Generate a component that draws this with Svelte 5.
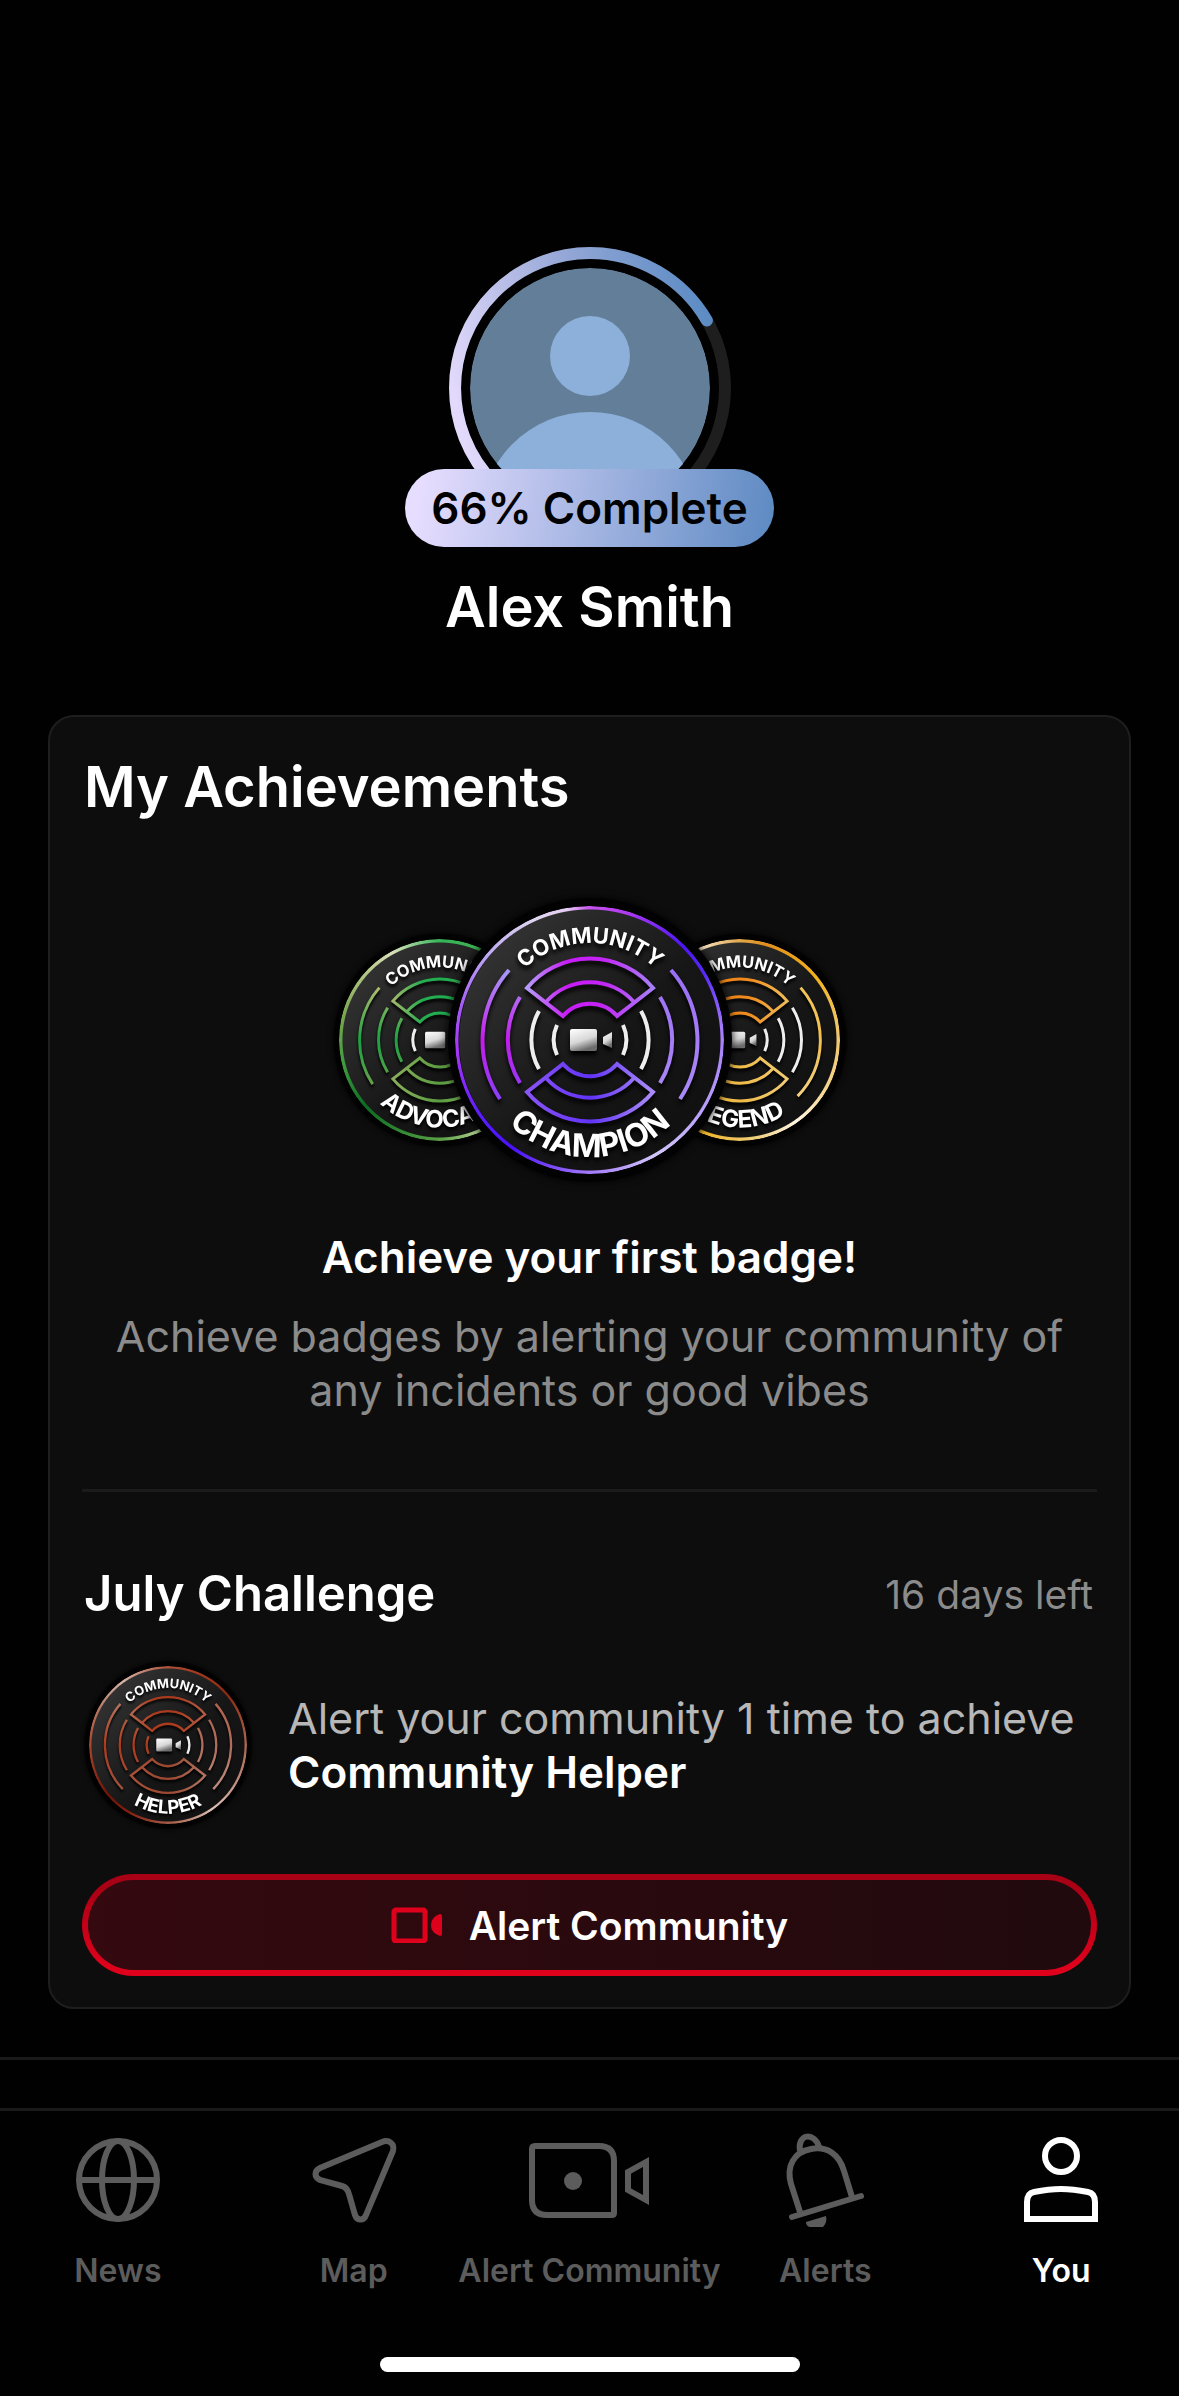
<script lang="ts">
	interface BadgeStyle {
		id: string,
		title: string,
		ring: string,
		top: string[],
		bottom: string[],
		left: string[],
		right: string[],
		litLeft: number,
		litRight: number,
		longArcs: boolean
	}

	const advocate: BadgeStyle = {
		id: "advocate",
		title: "ADVOCATE",
		ring: "#35b558, #4aa648 60deg, #9fc07a 110deg, #d5e3b4 145deg, #5aa045 180deg, #3f8f3a 195deg, #0d6b22 228deg, #3f9a3f 255deg, #7aa650 285deg, #b9c98c 315deg, #d8dfbb 332deg, #35b558",
		top: ["#a3b86a", "#21ad50", "#21ad50", "#6fb05a"],
		bottom: ["#8aae5c", "#5a9c40", "#8fb868"],
		left: ["#a9bb6c", "#1aa043", "#6f9f4a"],
		right: ["#6fb05a", "#8fb868", "#8fb868"],
		litLeft: 1,
		litRight: 2,
		longArcs: false
	};

	const champion: BadgeStyle = {
		id: "champion",
		title: "CHAMPION",
		ring: "#c653ee, #b23cf0 15deg, #4c16f5 45deg, #5a28f8 60deg, #a57cf8 85deg, #b9a2f8 125deg, #d2c6fb 150deg, #9a6cf8 185deg, #4a12f8 215deg, #5a1cfa 235deg, #a636f5 265deg, #a45cf3 285deg, #bdaaf2 310deg, #dcd5ee 335deg, #e6cdf3 350deg, #c653ee",
		top: ["#b69cf8", "#c81cf6", "#c424f6", "#a880f8"],
		bottom: ["#8a55f6", "#6133f6", "#ab8cfa"],
		left: ["#a894f6", "#c41cec", "#8444f6"],
		right: ["#9a70f6", "#a67cf6", "#a98cf8"],
		litLeft: 2,
		litRight: 2,
		longArcs: false
	};

	const legend: BadgeStyle = {
		id: "legend",
		title: "LEGEND",
		ring: "#e2a94e, #e08e1c 15deg, #f2b21c 50deg, #f0c564 80deg, #f5d58c 120deg, #fff6e4 145deg, #f0cf7e 170deg, #efb52c 200deg, #efab14 230deg, #f0c060 280deg, #fff 325deg, #e2a94e",
		top: ["#f0c060", "#f08414", "#f08c20", "#f0bc58"],
		bottom: ["#f2b93c", "#eebb48", "#f2cb74"],
		left: ["#f0c060", "#f08a1c", "#f0b030"],
		right: ["#f2c558", "#f0bf52", "#f3cf7c"],
		litLeft: 1,
		litRight: 3,
		longArcs: true
	};

	const helper: BadgeStyle = {
		id: "helper",
		title: "HELPER",
		ring: "#ab5038, #a33c20 20deg, #8c2a12 50deg, #a8604a 85deg, #c08e7e 120deg, #dcc0b6 145deg, #a86450 175deg, #842010 210deg, #701408 230deg, #a8482e 270deg, #b87c6a 300deg, #d6b4a8 325deg, #ab5038",
		top: ["#b46650", "#ac3a1c", "#ac3a1c", "#b05e46"],
		bottom: ["#aa5038", "#9c4830", "#b27462"],
		left: ["#b0705c", "#ac3a1c", "#a0503c"],
		right: ["#b06450", "#b06c5a", "#bc8a7c"],
		litLeft: 0,
		litRight: 1,
		longArcs: true
	};

	// innermost first
	const sideArcs = [
		{ r: 36, x1: 33, y1: -15, x2: 33, y2: 15 },
		{ r: 59, x1: 51, y1: -29, x2: 51, y2: 29 },
		{ r: 82, x1: 70, y1: -43, x2: 70, y2: 43 },
		{ r: 107, x1: 81, y1: -70, x2: 90, y2: 59 }
	];

	function sideArc(index: number, dir: number, long: boolean) {
		const a = sideArcs[index];
		const x2 = index == 3 && long ? 77 : a.x2;
		const y2 = index == 3 && long ? 75 : a.y2;
		return `M${a.x1 * dir} ${a.y1} A${a.r} ${a.r} 0 0 ${dir > 0 ? 1 : 0} ${x2 * dir} ${y2}`;
	}

	let stepsDone = $state(2);
	let stepsTotal = 3;
	let progress = $derived(stepsDone / stepsTotal * 100);
	let currentTab = $state("You");

	const tabs = ["News", "Map", "Alert Community", "Alerts", "You"];
</script>

{#snippet badge(b: BadgeStyle)}
	<div class="badge {b.id}" style="--ring: conic-gradient({b.ring})">
		<svg viewBox="-143 -143 286 286" role="img" aria-label="Community {b.title.toLowerCase()} badge">
			<defs>
				<linearGradient id="{b.id}-disc" x1="0" y1="0" x2="1" y2="1">
					<stop offset="0.1" stop-color="#343434" />
					<stop offset="0.55" stop-color="#161616" />
					<stop offset="0.9" stop-color="#101010" />
				</linearGradient>
				<linearGradient id="{b.id}-cam" x1="0" y1="0" x2="0.4" y2="1">
					<stop offset="0" stop-color="#fff" />
					<stop offset="0.6" stop-color="#d8d8d8" />
					<stop offset="1" stop-color="#6c6c6c" />
				</linearGradient>
				<linearGradient id="{b.id}-top" gradientUnits="userSpaceOnUse" x1="-63" y1="0" x2="63" y2="0">
					{#each b.top as color, i}
						<stop offset={[0, 0.32, 0.6, 1][i]} stop-color={color} />
					{/each}
				</linearGradient>
				<linearGradient id="{b.id}-bottom" gradientUnits="userSpaceOnUse" x1="-63" y1="0" x2="63" y2="0">
					{#each b.bottom as color, i}
						<stop offset={i / 2} stop-color={color} />
					{/each}
				</linearGradient>
				<linearGradient id="{b.id}-left" gradientUnits="userSpaceOnUse" x1="0" y1="-66" x2="0" y2="66">
					{#each b.left as color, i}
						<stop offset={i / 2} stop-color={color} />
					{/each}
				</linearGradient>
				<linearGradient id="{b.id}-right" gradientUnits="userSpaceOnUse" x1="0" y1="-66" x2="0" y2="66">
					{#each b.right as color, i}
						<stop offset={i / 2} stop-color={color} />
					{/each}
				</linearGradient>
				<path id="{b.id}-upper-line" d="M-97 0 A97 97 0 0 1 97 0" />
				<path id="{b.id}-lower-line" d="M-117 0 A117 117 0 0 0 117 0" />
			</defs>

			<circle class="shade" r="142" />
			<circle r="131" fill="url(#{b.id}-disc)" />

			<g class="lines">
				<g stroke="url(#{b.id}-top)">
					<path d="M-63 -52 A82 82 0 0 1 63 -52 L27 -24 A36 36 0 0 0 -27 -24 Z" />
					<path d="M-44 -38 A59 59 0 0 1 44 -38" />
				</g>
				<g stroke="url(#{b.id}-bottom)">
					<path d="M-63 52 A82 82 0 0 0 63 52 L27 24 A36 36 0 0 1 -27 24 Z" />
					<path d="M-44 38 A59 59 0 0 0 44 38" />
				</g>
				{#each sideArcs as _, i}
					<path d={sideArc(i, -1, b.longArcs)} stroke={i < b.litLeft ? "#eee" : `url(#${b.id}-left)`} />
					<path d={sideArc(i, 1, b.longArcs)} stroke={i < b.litRight ? "#eee" : `url(#${b.id}-right)`} />
				{/each}
			</g>

			<g class="camera" fill="url(#{b.id}-cam)">
				<rect x="-20" y="-11" width="27" height="22" rx="2" />
				<path d="M13 -3 L22 -8 V8 L13 4 Z" />
			</g>

			<g class="lettering">
				<text class="upper"><textPath href="#{b.id}-upper-line" startOffset="50%">COMMUNITY</textPath></text>
				<text class="lower"><textPath href="#{b.id}-lower-line" startOffset="50%">{b.title}</textPath></text>
			</g>
		</svg>
	</div>
{/snippet}

{#snippet tabIcon(name: string)}
	{#if name == "News"}
		<svg width="84" height="84" viewBox="0 0 84 84" aria-hidden="true">
			<circle cx="42" cy="42" r="39" />
			<ellipse cx="42" cy="42" rx="16" ry="39" />
			<path d="M3 42 H81" />
		</svg>
	{:else if name == "Map"}
		<svg width="84" height="84" viewBox="0 0 84 84" aria-hidden="true">
			<path d="M70 4 L8 30 C2 33 2 39 8 42 L30 48 C34 49 36 52 37 56 L43 77 C45 83 52 83 54 77 L81 13 C83 6 77 1 70 4 Z" />
		</svg>
	{:else if name == "Alert Community"}
		<svg width="120" height="84" viewBox="0 0 120 84" aria-hidden="true">
			<path d="M6 8 H70 Q85 8 85 23 V75 Q85 77 83 77 H18 Q3 77 3 62 V11 Q3 8 6 8 Z" />
			<circle class="solid" cx="44" cy="43" r="9" />
			<path d="M117 24 L99 34 V52 L117 62 Z" />
		</svg>
	{:else if name == "Alerts"}
		<svg width="84" height="84" viewBox="0 0 84 84" aria-hidden="true">
			<path d="M17 74 L8 46 C3 28 11 14 28 11 C44 8 56 16 61 33 L69 59" />
			<path d="M17 13 C14 -5 32 -6 36 9" />
			<path d="M9 79 L78 58" stroke-linecap="round" />
			<path class="solid" d="M23 84 L43 78 C44 82 43 86 40 89 H28 C25 89 23 87 23 84 Z" />
		</svg>
	{:else}
		<svg width="84" height="84" viewBox="0 0 84 84" aria-hidden="true">
			<circle cx="42" cy="18" r="16" />
			<path d="M8 81 V64 C8 58 10 55 15 54 C25 52 34 51 42 51 C50 51 59 52 69 54 C74 55 76 58 76 64 V81 Z" />
		</svg>
	{/if}
{/snippet}

<div class="page">
	<main>
		<header class="profile">
			<svg class="avatar" width="282" height="282" viewBox="0 0 282 282" role="img" aria-label="Profile picture">
				<defs>
					<linearGradient id="progress-stroke" gradientUnits="userSpaceOnUse" x1="6" y1="150" x2="262" y2="90">
						<stop offset="0" stop-color="#e2d9fb" />
						<stop offset="0.5" stop-color="#98a9d8" />
						<stop offset="1" stop-color="#5d8cc4" />
					</linearGradient>
					<clipPath id="avatar-clip"><circle cx="141" cy="141" r="120" /></clipPath>
				</defs>
				<circle cx="141" cy="141" r="135" fill="none" stroke="#1e1e1e" stroke-width="12" />
				<path
					d="M141 276 A135 135 0 0 1 141 6 A135 135 0 0 1 141 276"
					fill="none" stroke="url(#progress-stroke)" stroke-width="12" stroke-linecap="round"
					pathLength="100" stroke-dasharray="{progress} 100" />
				<g clip-path="url(#avatar-clip)">
					<circle cx="141" cy="141" r="120" fill="#637e98" />
					<circle cx="141" cy="109" r="40" fill="#8cb0d9" />
					<circle cx="141" cy="275" r="110" fill="#8cb0d9" />
				</g>
			</svg>
			<p class="pill">{Math.floor(progress)}% Complete</p>
			<h1>Alex Smith</h1>
		</header>

		<section class="card">
			<h2>My Achievements</h2>

			<div class="badges">
				{@render badge(advocate)}
				{@render badge(champion)}
				{@render badge(legend)}
			</div>

			<h3>Achieve your first badge!</h3>
			<p class="hint">Achieve badges by alerting your community of any incidents or good vibes</p>

			<hr />

			<div class="challenge-head">
				<h2>July Challenge</h2>
				<span>16 days left</span>
			</div>

			<div class="challenge">
				{@render badge(helper)}
				<p>Alert your community 1 time to achieve <strong>Community Helper</strong></p>
			</div>

			<button class="alert-button" type="button">
				<svg width="52" height="36" viewBox="0 0 52 36" aria-hidden="true">
					<rect x="3" y="3" width="31" height="31" rx="2" fill="none" stroke="#df001c" stroke-width="5" />
					<path d="M51 9 V27 Q51 29 49 29 Q40 26 40 18 Q40 10 49 7 Q51 7 51 9 Z" fill="#df001c" />
				</svg>
				Alert Community
			</button>
		</section>

		<div class="next-section"></div>
	</main>

	<nav>
		<ul>
			{#each tabs as tab}
				<li>
					<button type="button" class:active={currentTab == tab} onclick={() => currentTab = tab}>
						{@render tabIcon(tab)}
						<span>{tab}</span>
					</button>
				</li>
			{/each}
		</ul>
		<div class="home-bar"></div>
	</nav>
</div>

<style>
	:global(body) {
		background: #010101;
	}

	.page {
		display: flex;
		flex-direction: column;
		min-height: 100vh;
		color: #fff;
		font-family: Inter, "Liberation Sans", sans-serif;
	}

	h1, h2, h3, p, ul {
		margin: 0;
		padding: 0;
		font-weight: 600;
	}

	button {
		font: inherit;
		cursor: pointer;
	}

	main {
		flex: 1;
		display: flex;
		flex-direction: column;
		padding-top: 247px;
	}

	.profile {
		display: flex;
		flex-direction: column;
		align-items: center;
	}

	.pill {
		position: relative;
		margin-top: -60px;
		padding: 0 26px;
		border-radius: 39px;
		background: linear-gradient(100deg, #e6ddff 5%, #5f8bc3 98%);
		color: #000;
		font-size: 44px;
		line-height: 78px;
	}

	h1 {
		margin-top: 24px;
		font-size: 56px;
		line-height: 72px;
	}

	.card {
		display: flex;
		flex-direction: column;
		margin: 72px 48px 48px;
		padding: 34px 32px 31px;
		border: 2px solid #1e1e1e;
		border-radius: 26px;
		background: #0d0d0d;
	}

	.card h2 {
		padding: 0 2px;
		font-size: 56px;
		line-height: 72px;
	}

	.badges {
		display: flex;
		justify-content: center;
		align-items: center;
		margin-top: 74px;
	}

	.badge {
		position: relative;
		flex: none;
		width: 214px;
		height: 214px;
	}

	.badge.advocate { margin-right: -100px; }
	.badge.legend { margin-left: -100px; }

	.badge.champion {
		z-index: 1;
		width: 286px;
		height: 286px;
	}

	.badge.helper {
		width: 168px;
		height: 168px;
	}

	.badge svg {
		display: block;
		width: 100%;
		height: 100%;
		overflow: visible;
	}

	.badge::after {
		content: "";
		position: absolute;
		inset: 3%;
		border-radius: 50%;
		background: var(--ring);
		mask: radial-gradient(closest-side, transparent calc(100% - 4px), #000 calc(100% - 3px));
	}

	.badge.helper::after {
		mask: radial-gradient(closest-side, transparent calc(100% - 3px), #000 calc(100% - 2px));
	}

	.shade {
		fill: #020202;
		filter: drop-shadow(0 0 4px #000);
	}

	.lines {
		fill: none;
		stroke-width: 4;
		filter: drop-shadow(0 4px 2px #000);
	}

	.camera { filter: drop-shadow(0 4px 2px #000); }

	.lettering {
		fill: #fff;
		font-weight: 700;
		text-anchor: middle;
		filter: drop-shadow(0 4px 2px #000);
	}

	.upper { font-size: 22px; }
	.lower { font-size: 32px; }

	h3 {
		margin-top: 46px;
		font-size: 44px;
		line-height: 56px;
		text-align: center;
	}

	.hint {
		margin-top: 24px;
		color: #8b8b8b;
		font-size: 43px;
		font-weight: 400;
		line-height: 54px;
		text-align: center;
	}

	hr {
		width: 100%;
		height: 3px;
		margin: 72px 0;
		border: 0;
		background: #1b1b1b;
	}

	.challenge-head {
		display: flex;
		justify-content: space-between;
		align-items: center;
	}

	.challenge-head h2 {
		font-size: 49px;
		line-height: 60px;
	}

	.challenge-head span {
		padding-right: 4px;
		color: #8b8b8b;
		font-size: 39px;
	}

	.challenge {
		display: flex;
		align-items: center;
		gap: 36px;
		margin: 37px 0 45px;
		padding-left: 2px;
	}

	.challenge p {
		color: #b7b7b7;
		font-size: 43px;
		font-weight: 400;
		line-height: 54px;
	}

	.challenge strong {
		color: #fff;
		font-size: 44px;
		font-weight: 600;
	}

	.alert-button {
		display: flex;
		justify-content: center;
		align-items: center;
		gap: 26px;
		height: 102px;
		border: 6px solid transparent;
		border-radius: 51px;
		background:
			linear-gradient(90deg, #34090f, #200a0d) padding-box,
			linear-gradient(#a80014, #a80014 10%, #df001c 90%) border-box;
		color: #fff;
		font-size: 39px;
		font-weight: 600;
	}

	.next-section {
		flex: 1;
		min-height: 48px;
		border-top: 3px solid #1a1a1a;
	}

	nav {
		padding: 27px 0 24px;
		border-top: 3px solid #1a1a1a;
		background: #010101;
	}

	nav ul {
		display: grid;
		grid-template-columns: repeat(5, 1fr);
		list-style: none;
	}

	nav li {
		display: flex;
		justify-content: center;
		min-width: 0;
	}

	nav button {
		display: flex;
		flex-direction: column;
		align-items: center;
		gap: 29px;
		padding: 0;
		border: 0;
		background: none;
		color: #5c5c5c;
		font-size: 32px;
		font-weight: 600;
		line-height: 40px;
		white-space: nowrap;
	}

	nav button.active { color: #fff; }

	nav svg {
		overflow: visible;
		fill: none;
		stroke: currentColor;
		stroke-width: 6;
	}

	nav .solid {
		fill: currentColor;
		stroke: none;
	}

	.home-bar {
		width: 36%;
		max-width: 420px;
		height: 15px;
		margin: 66px auto 0;
		border-radius: 8px;
		background: #fff;
	}
</style>
